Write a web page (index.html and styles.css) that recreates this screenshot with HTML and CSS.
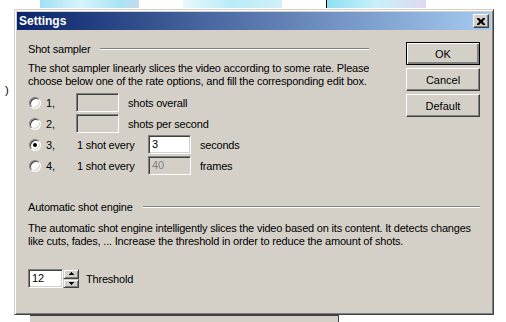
FILE: index.html
```html
<!DOCTYPE html>
<html>
    <head>
        <title>Settings</title>
        <link rel="stylesheet" href="styles.css">
    </head>
    <body>
        <div class="desktop">
            <div class="thumbs">
                <div class="thumb thumb-1"></div>
                <div class="thumb thumb-2"></div>
                <div class="thumb thumb-3"></div>
            </div>
            <div class="middle">
                <div class="side">)</div>
                <div class="dialog">
                    <div class="titlebar">
                        <span class="title">Settings</span>
                        <span class="close">
                            <svg width="8" height="7" viewBox="0 0 8 7">
                                <path d="M0 0h2l2 2 2-2h2v1l-2 2v1l2 2v1h-2l-2-2-2 2h-2v-1l2-2v-1l-2-2z" fill="#000"/>
                            </svg>
                        </span>
                    </div>
                    <div class="content">
                        <div class="top">
                            <div class="sampler">
                                <div class="group-head">
                                    <span>Shot sampler</span>
                                    <span class="rule"></span>
                                </div>
                                <p class="note">The shot sampler linearly slices the video according to some rate. Please choose below one of the rate options, and fill the corresponding edit box.</p>
                                <div class="rows">
                                    <div class="row">
                                        <span class="opt"><span class="radio"></span>1,</span>
                                        <span class="edit disabled"></span>
                                        <span class="unit">shots overall</span>
                                    </div>
                                    <div class="row">
                                        <span class="opt"><span class="radio"></span>2,</span>
                                        <span class="edit disabled"></span>
                                        <span class="unit">shots per second</span>
                                    </div>
                                    <div class="row">
                                        <span class="opt"><span class="radio checked"></span>3,</span>
                                        <span class="every">1 shot every</span>
                                        <span class="edit">3</span>
                                        <span class="unit">seconds</span>
                                    </div>
                                    <div class="row">
                                        <span class="opt"><span class="radio"></span>4,</span>
                                        <span class="every">1 shot every</span>
                                        <span class="edit disabled">40</span>
                                        <span class="unit">frames</span>
                                    </div>
                                </div>
                            </div>
                            <div class="buttons">
                                <button class="btn default">OK</button>
                                <button class="btn">Cancel</button>
                                <button class="btn">Default</button>
                            </div>
                        </div>
                        <div class="group-head engine-head">
                            <span>Automatic shot engine</span>
                            <span class="rule"></span>
                        </div>
                        <p class="note engine-note">The automatic shot engine intelligently slices the video based on its content. It detects changes like cuts, fades, ... Increase the threshold in order to reduce the amount of shots.</p>
                        <div class="spin-row">
                            <span class="edit spin-edit">12</span>
                            <span class="spinner">
                                <span class="arrow"><svg width="5" height="3" viewBox="0 0 5 3"><path d="M2 0h1v1h1v1h1v1h-5v-1h1v-1h1z" fill="#000"/></svg></span>
                                <span class="arrow"><svg width="5" height="3" viewBox="0 0 5 3"><path d="M0 0h5v1h-1v1h-1v1h-1v-1h-1v-1h-1z" fill="#000"/></svg></span>
                            </span>
                            <span class="unit">Threshold</span>
                        </div>
                    </div>
                </div>
            </div>
            <div class="under"></div>
        </div>
    </body>
</html>
```

FILE: styles.css
```css
body {
    margin: 0;
    padding: 0;
    background: #fff;
    font-family: "Liberation Sans", Arial, sans-serif;
    font-size: 11px;
    letter-spacing: -0.2px;
    color: #000;
}
.desktop {
    width: 506px;
    height: 322px;
    overflow: hidden;
}
.thumbs {
    display: flex;
    height: 9px;
    padding-left: 40px;
    gap: 44px;
}
.thumb {
    width: 99px;
    height: 8px;
    background: linear-gradient(90deg, #9fe0f4, #d8f4fc 40%, #a8e4f4 80%, #c8d8f0);
}
.thumb-2 {
    background: linear-gradient(90deg, #e8f8fc, #b8ecf8 50%, #d0f0f8);
}
.thumb-3 {
    border-left: 1px solid #000;
    background: linear-gradient(90deg, #8ee0f4, #c8f0fa 50%, #e0d8f0);
}
.middle {
    display: flex;
}
.side {
    width: 14px;
    padding-top: 75px;
    padding-left: 5px;
    box-sizing: border-box;
}
.dialog {
    width: 480px;
    height: 306px;
    box-sizing: border-box;
    background: #d4d0c8;
    border: 1px solid;
    border-color: #d4d0c8 #404040 #404040 #d4d0c8;
    box-shadow: inset 1px 1px #fff, inset -1px -1px #808080;
    padding: 2px;
}
.titlebar {
    height: 18px;
    display: flex;
    align-items: center;
    justify-content: space-between;
    padding: 0 2px;
    background: linear-gradient(90deg, #0a246a, #a6caf0);
}
.title {
    color: #fff;
    font-weight: bold;
    font-size: 12px;
    letter-spacing: 0;
}
.close {
    width: 16px;
    height: 14px;
    box-sizing: border-box;
    display: flex;
    align-items: center;
    justify-content: center;
    background: #d4d0c8;
    border: 1px solid;
    border-color: #fff #404040 #404040 #fff;
    box-shadow: inset -1px -1px #808080;
}
.content {
    padding: 12px 11px 0 11px;
}
.top {
    display: flex;
    justify-content: space-between;
}
.sampler {
    width: 345px;
}
.group-head {
    display: flex;
    align-items: center;
    height: 14px;
    line-height: 14px;
}
.sampler .group-head {
    margin-right: 4px;
}
.rule {
    flex: 1;
    height: 0;
    margin-left: 10px;
    border-top: 1px solid #808080;
    border-bottom: 1px solid #fff;
}
.note {
    margin: 6px 0 0 0;
    line-height: 13px;
}
.rows {
    margin-top: 4px;
}
.row {
    display: flex;
    align-items: center;
    height: 21px;
}
.opt {
    display: flex;
    align-items: center;
    width: 48px;
    padding-left: 1px;
    box-sizing: border-box;
}
.radio {
    width: 12px;
    height: 12px;
    box-sizing: border-box;
    border-radius: 50%;
    border: 1px solid;
    border-color: #808080 #fff #fff #808080;
    box-shadow: inset 1px 1px #404040, inset -1px -1px #d4d0c8;
    background: #fff;
    margin-right: 5px;
    position: relative;
}
.radio.checked::after {
    content: "";
    position: absolute;
    left: 3px;
    top: 3px;
    width: 4px;
    height: 4px;
    border-radius: 50%;
    background: #000;
}
.every {
    width: 72px;
    padding-left: 1px;
    box-sizing: border-box;
}
.edit {
    width: 43px;
    height: 19px;
    box-sizing: border-box;
    border: 1px solid;
    border-color: #808080 #fff #fff #808080;
    box-shadow: inset 1px 1px #404040, inset -1px -1px #d4d0c8;
    background: #fff;
    padding: 2px 0 0 3px;
    line-height: 13px;
    margin-right: 9px;
}
.edit.disabled {
    background: #d4d0c8;
    color: #808080;
}
.buttons {
    display: flex;
    flex-direction: column;
    gap: 3px;
}
.btn {
    width: 74px;
    height: 23px;
    box-sizing: border-box;
    font-family: "Liberation Sans", Arial, sans-serif;
    font-size: 11px;
    color: #000;
    background: #d4d0c8;
    border: 1px solid;
    border-color: #fff #404040 #404040 #fff;
    box-shadow: inset -1px -1px #808080;
    padding: 0;
}
.btn.default {
    border: 1px solid #000;
    box-shadow: inset 1px 1px #fff, inset -2px -2px #808080;
}
.engine-head {
    margin-top: 24px;
}
.engine-note {
    margin-top: 8px;
}
.spin-row {
    display: flex;
    align-items: center;
    margin-top: 21px;
}
.spin-edit {
    width: 35px;
    margin-right: 0;
}
.spinner {
    display: flex;
    flex-direction: column;
    width: 16px;
    height: 19px;
    margin-right: 7px;
}
.arrow {
    flex: 1;
    display: flex;
    align-items: center;
    justify-content: center;
    background: #d4d0c8;
    border: 1px solid;
    border-color: #d4d0c8 #404040 #404040 #d4d0c8;
    box-shadow: inset 1px 1px #fff, inset -1px -1px #808080;
}
.under {
    margin-left: 30px;
    width: 308px;
    height: 8px;
    background: #d4d0c8;
    border-top: 1px solid #404040;
    border-right: 1px solid #404040;
}
```
